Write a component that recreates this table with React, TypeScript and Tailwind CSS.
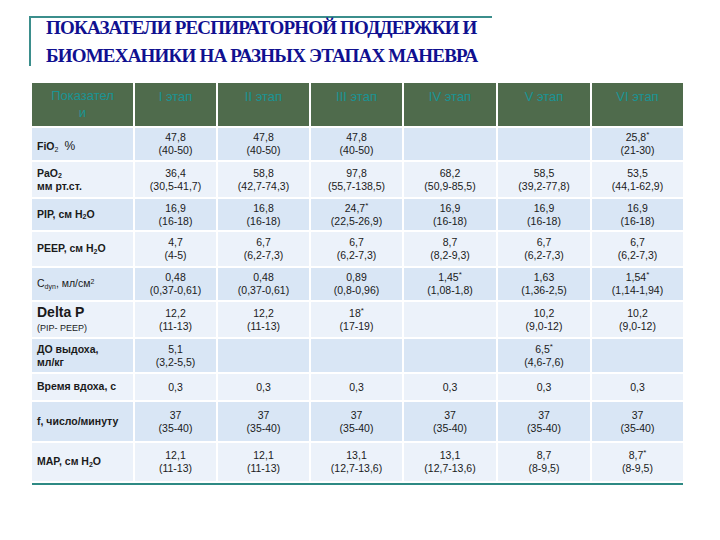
import React from "react";

type Cell = { v: string; r: string; star?: boolean } | null;

const rows: { label: React.ReactNode; h: number; dark: boolean; cells: Cell[] }[] = [
  {
    label: (
      <span className="inline-block mt-[4px]">
        FiO<sub className="text-[7px] font-normal">2</sub>
        <span className="ml-[6px] text-[12px] font-normal">%</span>
      </span>
    ),
    h: 34,
    dark: true,
    cells: [
      { v: "47,8", r: "(40-50)" },
      { v: "47,8", r: "(40-50)" },
      { v: "47,8", r: "(40-50)" },
      null,
      null,
      { v: "25,8", r: "(21-30)", star: true },
    ],
  },
  {
    label: (
      <span className="leading-[13px] block">
        PaO<sub className="text-[7px]">2</sub>
        <br />
        мм рт.ст.
      </span>
    ),
    h: 37,
    dark: false,
    cells: [
      { v: "36,4", r: "(30,5-41,7)" },
      { v: "58,8", r: "(42,7-74,3)" },
      { v: "97,8", r: "(55,7-138,5)" },
      { v: "68,2", r: "(50,9-85,5)" },
      { v: "58,5", r: "(39,2-77,8)" },
      { v: "53,5", r: "(44,1-62,9)" },
    ],
  },
  {
    label: (
      <span>
        PIP, см H<sub className="text-[7px]">2</sub>O
      </span>
    ),
    h: 33,
    dark: true,
    cells: [
      { v: "16,9", r: "(16-18)" },
      { v: "16,8", r: "(16-18)" },
      { v: "24,7", r: "(22,5-26,9)", star: true },
      { v: "16,9", r: "(16-18)" },
      { v: "16,9", r: "(16-18)" },
      { v: "16,9", r: "(16-18)" },
    ],
  },
  {
    label: (
      <span>
        PEEP, см H<sub className="text-[7px]">2</sub>O
      </span>
    ),
    h: 36,
    dark: false,
    cells: [
      { v: "4,7", r: "(4-5)" },
      { v: "6,7", r: "(6,2-7,3)" },
      { v: "6,7", r: "(6,2-7,3)" },
      { v: "8,7", r: "(8,2-9,3)" },
      { v: "6,7", r: "(6,2-7,3)" },
      { v: "6,7", r: "(6,2-7,3)" },
    ],
  },
  {
    label: (
      <span className="font-normal">
        C<sub className="text-[7px]">dyn</sub>, мл/см<sup className="text-[7px]">2</sup>
      </span>
    ),
    h: 34,
    dark: true,
    cells: [
      { v: "0,48", r: "(0,37-0,61)" },
      { v: "0,48", r: "(0,37-0,61)" },
      { v: "0,89", r: "(0,8-0,96)" },
      { v: "1,45", r: "(1,08-1,8)", star: true },
      { v: "1,63", r: "(1,36-2,5)" },
      { v: "1,54", r: "(1,14-1,94)", star: true },
    ],
  },
  {
    label: (
      <span className="block">
        <span className="block text-[14px] leading-[16px] font-bold">Delta P</span>
        <span className="block text-[9px] font-normal leading-[13px] mt-[2px]">(PIP- PEEP)</span>
      </span>
    ),
    h: 37,
    dark: false,
    cells: [
      { v: "12,2", r: "(11-13)" },
      { v: "12,2", r: "(11-13)" },
      { v: "18", r: "(17-19)", star: true },
      null,
      { v: "10,2", r: "(9,0-12)" },
      { v: "10,2", r: "(9,0-12)" },
    ],
  },
  {
    label: (
      <span className="block leading-[13px]">
        ДО выдоха,
        <br />
        мл/кг
      </span>
    ),
    h: 35,
    dark: true,
    cells: [
      { v: "5,1", r: "(3,2-5,5)" },
      null,
      null,
      null,
      { v: "6,5", r: "(4,6-7,6)", star: true },
      null,
    ],
  },
  {
    label: <span>Время вдоха, с</span>,
    h: 28,
    dark: false,
    cells: [
      { v: "0,3", r: "" },
      { v: "0,3", r: "" },
      { v: "0,3", r: "" },
      { v: "0,3", r: "" },
      { v: "0,3", r: "" },
      { v: "0,3", r: "" },
    ],
  },
  {
    label: <span>f, число/минуту</span>,
    h: 41,
    dark: true,
    cells: [
      { v: "37", r: "(35-40)" },
      { v: "37", r: "(35-40)" },
      { v: "37", r: "(35-40)" },
      { v: "37", r: "(35-40)" },
      { v: "37", r: "(35-40)" },
      { v: "37", r: "(35-40)" },
    ],
  },
  {
    label: (
      <span>
        MAP, см H<sub className="text-[7px]">2</sub>O
      </span>
    ),
    h: 39,
    dark: false,
    cells: [
      { v: "12,1", r: "(11-13)" },
      { v: "12,1", r: "(11-13)" },
      { v: "13,1", r: "(12,7-13,6)" },
      { v: "13,1", r: "(12,7-13,6)" },
      { v: "8,7", r: "(8-9,5)" },
      { v: "8,7", r: "(8-9,5)", star: true },
    ],
  },
];

const widths = [102, 83, 93, 93, 94, 94, 92];
const heads = ["I этап", "II этап", "III этап", "IV этап", "V этап", "VI этап"];

export default function App() {
  return (
    <div
      className="w-[720px] h-[540px] bg-white overflow-hidden"
      style={{ fontFamily: '"Liberation Sans", Arial, sans-serif' }}
    >
      <div className="pt-[16px] pl-[29px]">
        <div className="w-[463px] h-[50px] border-l-2 border-t-2 border-[#3b8e8c] pl-[15px]">
          <div
            className="text-[19px] font-bold leading-[28px] tracking-[-0.8px] text-[#101090] whitespace-nowrap -mt-[4px]"
            style={{ fontFamily: '"Liberation Serif", "Times New Roman", serif' }}
          >
            ПОКАЗАТЕЛИ РЕСПИРАТОРНОЙ ПОДДЕРЖКИ И
            <br />
            БИОМЕХАНИКИ НА РАЗНЫХ ЭТАПАХ МАНЕВРА
          </div>
        </div>
      </div>
      <div className="ml-[32px] mt-[17px] w-[651px]">
        <table className="border-collapse table-fixed w-[651px] text-[#1a1a1a]">
          <colgroup>
            {widths.map((w, i) => (
              <col key={i} style={{ width: w }} />
            ))}
          </colgroup>
          <thead>
            <tr className="h-[44px] bg-[#4f6b4c]">
              <th className="border-x-2 border-white border-l-0 text-[13px] font-normal leading-[17px] text-[#1a9494] align-top pt-[4px]">
                Показател
                <br />и
              </th>
              {heads.map((h, i) => (
                <th
                  key={h}
                  className={`border-x-2 border-white text-[13px] font-normal text-[#1a9494] align-top pt-[4px] ${i === 5 ? "border-r-0" : ""}`}
                >
                  {h}
                </th>
              ))}
            </tr>
          </thead>
          <tbody>
            {rows.map((row, ri) => (
              <tr
                key={ri}
                className={row.dark ? "bg-[#d9e6f5]" : "bg-[#ecf2fa]"}
                style={{ height: row.h }}
              >
                <td className="border-x-2 border-t-2 border-l-0 border-white pl-[5px] text-[10.5px] font-bold align-middle">
                  {row.label}
                </td>
                {row.cells.map((c, ci) => (
                  <td
                    key={ci}
                    className={`border-x-2 border-t-2 border-white text-center text-[10.5px] leading-[13px] align-middle ${ci === 5 ? "border-r-0" : ""}`}
                  >
                    {c && (
                      <div>
                        <div>
                          {c.v}
                          {c.star && <sup className="text-[8px]">*</sup>}
                        </div>
                        {c.r && <div>{c.r}</div>}
                      </div>
                    )}
                  </td>
                ))}
              </tr>
            ))}
          </tbody>
        </table>
        <div className="h-[2px] mt-[2px] bg-[#2e8a84]" />
      </div>
    </div>
  );
}
